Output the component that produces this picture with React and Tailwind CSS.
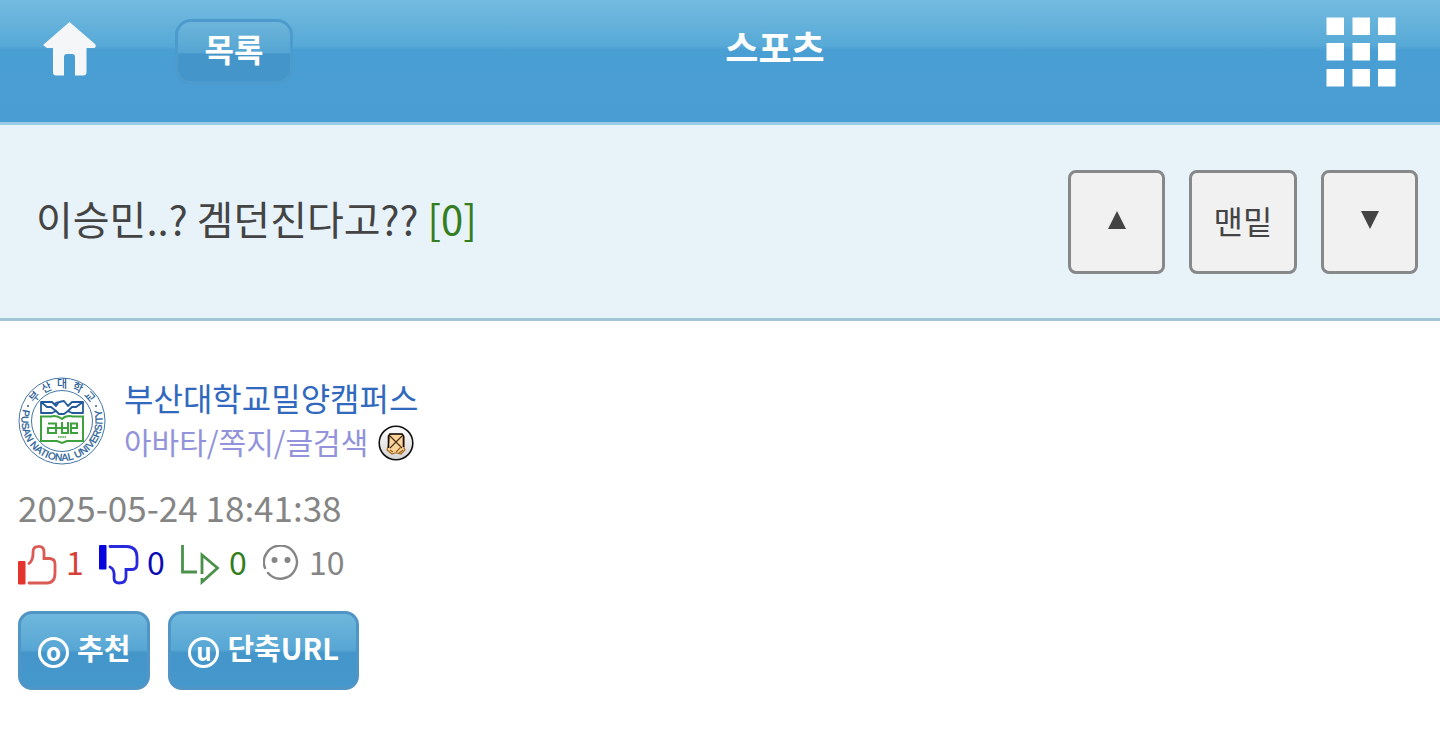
import React from "react";

const stats = [
  { label: "추천", value: 1, color: "text-[#d63f35]", width: "w-[47px]", Icon: ThumbUp },
  { label: "비추천", value: 0, color: "text-[#0b0bb5]", width: "w-[48px]", Icon: ThumbDown },
  { label: "댓글", value: 0, color: "text-[#347d20]", width: "w-[48px]", Icon: Reply },
  { label: "조회", value: 10, color: "text-[#858585]", width: "w-[46px]", Icon: Face },
];

function HomeIcon() {
  return (
    <svg viewBox="0 0 54 54" className="w-[54px] h-[54px] fill-[#f5f6f7]" aria-hidden="true">
      <path d="M26.5 0 L52 22 Q54 25 51 26 H43.5 V50 Q43.5 53.5 40 53.5 H32 V35 Q32 32 29 32 H24 Q21 32 21 35 V53.5 H13 Q10 53.5 10 50 V26 H4 L0 23Z" />
    </svg>
  );
}

function GridIcon() {
  return (
    <svg viewBox="0 0 70 70" className="w-[70px] h-[70px] fill-white" aria-hidden="true">
      {[0.5, 26, 52].map((y) =>
        [0.5, 26.5, 52].map((x) => (
          <rect key={`${x}-${y}`} x={x} y={y} width="17.5" height="17.5" />
        ))
      )}
    </svg>
  );
}

function Emblem() {
  return (
    <svg viewBox="0 0 88 88" className="w-[88px] h-[88px] shrink-0" role="img" aria-label="부산대학교">
      <defs>
        <path id="arc-top" d="M11 44 A33 33 0 0 1 77 44" />
        <path id="arc-bottom" d="M4.6 34 A40.5 40.5 0 1 0 83.4 34" />
      </defs>
      <circle cx="44" cy="44" r="43" fill="#fff" stroke="#4577a6" strokeWidth="1" />
      <circle cx="44" cy="44" r="30.5" fill="none" stroke="#4577a6" strokeWidth="1" />
      <g
        fontFamily="'Noto Sans CJK KR', sans-serif"
        fontSize="11"
        fontWeight="500"
        fill="#285d96"
        textAnchor="middle"
      >
        <text><textPath href="#arc-top" startOffset="23%">부</textPath></text>
        <text><textPath href="#arc-top" startOffset="36%">산</textPath></text>
        <text><textPath href="#arc-top" startOffset="50%">대</textPath></text>
        <text><textPath href="#arc-top" startOffset="64%">학</textPath></text>
        <text><textPath href="#arc-top" startOffset="77%">교</textPath></text>
      </g>
      <text
        fontFamily="'Liberation Sans', sans-serif"
        fontSize="10"
        fill="#285d96"
        stroke="#285d96"
        strokeWidth="0.3"
        textAnchor="middle"
      >
        <textPath href="#arc-bottom" startOffset="50%">
          PUSAN NATIONAL UNIVERSITY
        </textPath>
      </text>
      <circle cx="10" cy="29" r="1" fill="#285d96" />
      <circle cx="78" cy="29" r="1" fill="#285d96" />
      <path
        d="M23 25 H34 L38 29 L41 25 L46 24 L50 29 L54 25 H65 V36 H54 L50 34 L46 37 H41 L38 34 L34 36 H23Z"
        fill="none"
        stroke="#24599b"
        strokeWidth="1.8"
        strokeLinejoin="round"
      />
      <path
        d="M23 25 L29 30 H33 L38 34 M65 25 L58 30 H54 L50 34 M40 25 L36 27"
        fill="none"
        stroke="#24599b"
        strokeWidth="1.8"
      />
      <path
        d="M44 42 Q39 38 33 39.5 H23 V64 H39 L44 66 L49 64 H65 V39.5 H55 Q48 38 44 42Z"
        fill="none"
        stroke="#3da23e"
        strokeWidth="2"
      />
      <path
        d="M30 46.5 H38 V56 H30 V51 H44 V45 M44 56 V46 M44 51 H50 M50 45 V56 H43 M60 56 H53 V46.5 H59 V51 H53"
        fill="none"
        stroke="#3da23e"
        strokeWidth="2"
      />
      <path d="M40 60 H48" stroke="#3da23e" strokeWidth="1.6" strokeDasharray="1.5 0.7" />
    </svg>
  );
}

function LevelBadge() {
  return (
    <svg viewBox="0 0 36 36" className="w-9 h-9 shrink-0" aria-hidden="true">
      <defs>
        <linearGradient id="badge" x1="0" y1="0" x2="0" y2="1">
          <stop offset="0" stopColor="#fff" />
          <stop offset="1" stopColor="#d4d4d4" />
        </linearGradient>
      </defs>
      <circle cx="18" cy="18" r="16.8" fill="url(#badge)" stroke="#111" strokeWidth="1.6" />
      <path
        d="M12 9 H24 L26 12 V23 L27 25 L23 29 L19 28 L17 28 L14 29 L9 25 L10 22Z"
        fill="#fbd49a"
        stroke="#a86f25"
        strokeWidth="1.2"
      />
      <path d="M10.5 23 V11 L12 9 H24 L25.5 11 V22" fill="none" stroke="#111" strokeWidth="1.6" />
      <path d="M12 11 L24 23 M24 11 L12 23" stroke="#4a2f16" strokeWidth="1.2" />
      <path d="M12 25 L15 27 M18 27 L23 22 M21 28 L25 25" stroke="#9b611d" strokeWidth="1.2" />
    </svg>
  );
}

function ThumbUp() {
  return (
    <svg viewBox="0 0 40 40" className="w-10 h-10" fill="none" aria-hidden="true">
      <rect x="0" y="16" width="7.5" height="23.5" rx="1" fill="#e3352d" />
      <path
        d="M11 18.5 Q15.5 15 15 7 Q15 1.5 20 1.5 Q26 1 26 7 V13.5 H32 Q37 14 37 19 V28 Q37 38 29 38 H11"
        stroke="#dc5a54"
        strokeWidth="2.8"
        strokeLinecap="round"
      />
    </svg>
  );
}

function ThumbDown() {
  return (
    <svg viewBox="0 0 40 40" className="w-10 h-10" fill="none" aria-hidden="true">
      <rect x="0" y="0" width="7.5" height="24.5" rx="1" fill="#0606dc" />
      <path
        d="M11 1.5 H28 Q38 2 38 12 V19 Q38 24.5 33 24.5 H27 V32 Q27 38 20 38 Q15 38 15 33 Q16 24 11 22"
        stroke="#2929dc"
        strokeWidth="2.8"
        strokeLinecap="round"
      />
    </svg>
  );
}

function Reply() {
  return (
    <svg viewBox="0 0 40 40" className="w-10 h-10" fill="none" stroke="#4a914a" strokeWidth="2.8" aria-hidden="true">
      <path d="M1.5 0 V27 H16" />
      <path d="M21 29 V10 L36.5 23 L21 37 V33" />
    </svg>
  );
}

function Face() {
  return (
    <svg viewBox="0 0 38 40" className="w-[38px] h-10" aria-hidden="true">
      <path
        d="M2 23 A16.5 16.5 0 1 1 5 28"
        fill="none"
        stroke="#858585"
        strokeWidth="2.4"
        strokeLinecap="round"
      />
      <circle cx="11.5" cy="15" r="3" fill="#858585" />
      <circle cx="24.5" cy="15" r="3" fill="#858585" />
    </svg>
  );
}

function CircleLetter({ children }) {
  return (
    <span className="flex items-center justify-center w-[31px] h-[31px] mt-1 rounded-full border-3 border-white text-2xl leading-none pb-1">
      {children}
    </span>
  );
}

export default function App() {
  return (
    <div className="bg-white text-[#444] font-['Noto_Sans_CJK_KR',sans-serif]">
      <header className="flex items-start h-[125px] border-b-3 border-[#99cae6] bg-[linear-gradient(to_bottom,#73bbdf_0px,#57a9d7_46px,#499ed3_50px,#499dd3_100%)] pl-[43px] pr-11 text-white">
        <a href="#home" aria-label="홈" className="mt-[22px]">
          <HomeIcon />
        </a>
        <button className="ml-[78px] mt-[19px] w-[118px] h-[65px] rounded-2xl border-3 border-[#4d9bcc] bg-[linear-gradient(to_bottom,#6db5da_0%,#55a5d3_52%,#4496ca_54%,#4496ca_100%)] text-[32px] leading-none font-bold pb-2">
          목록
        </button>
        <h1 className="flex-1 mt-[22px] pr-[69px] text-center text-4xl leading-[48px] font-bold">스포츠</h1>
        <button aria-label="메뉴" className="mt-[17px]">
          <GridIcon />
        </button>
      </header>

      <section className="flex items-center justify-between h-[196px] border-b-3 border-[#a0c5d9] bg-[#e7f2f9] pl-9 pr-[22px]">
        <h2 className="pb-2 text-[40px] leading-[56px]">
          이승민..? 겜던진다고?? <span className="text-[#347d20]">[0]</span>
        </h2>
        <nav className="flex gap-6 text-[32px]">
          <button aria-label="이전글" className="flex items-center justify-center w-[97px] h-[104px] rounded-lg border-3 border-[#868889] bg-[#f1f1f1] pb-1">
            <svg viewBox="0 0 18 18" className="w-[18px] h-[18px] fill-[#444]" aria-hidden="true">
              <path d="M9 0 L18 18 H0Z" />
            </svg>
          </button>
          <button className="w-[108px] h-[104px] rounded-lg border-3 border-[#868889] bg-[#f1f1f1] pb-1">맨밑</button>
          <button aria-label="다음글" className="flex items-center justify-center w-[97px] h-[104px] rounded-lg border-3 border-[#868889] bg-[#f1f1f1] pb-1">
            <svg viewBox="0 0 18 18" className="w-[18px] h-[18px] fill-[#444]" aria-hidden="true">
              <path d="M0 0 H18 L9 18Z" />
            </svg>
          </button>
        </nav>
      </section>

      <main className="px-[18px] pt-14 pb-16">
        <div className="flex items-center gap-[18px]">
          <Emblem />
          <div>
            <a href="#author" className="block pb-1 text-[32px] leading-10 text-[#3069bd]">
              부산대학교밀양캠퍼스
            </a>
            <div className="flex items-center gap-[10px] text-[30px] leading-10 text-[#9293da]">
              <a href="#profile" className="pb-1">아바타/쪽지/글검색</a>
              <LevelBadge />
            </div>
          </div>
        </div>

        <p className="mt-[18px] text-[35px] leading-[48px] text-[#858585]">2025-05-24 18:41:38</p>

        <ul className="flex mt-[14px] gap-[34px] text-[32px] leading-10">
          {stats.map(({ label, value, color, width, Icon }) => (
            <li key={label} aria-label={label} className={`flex items-start gap-2 h-10 ${width} ${color}`}>
              <span className="shrink-0">
                <Icon />
              </span>
              <span className="-mt-1">{value}</span>
            </li>
          ))}
        </ul>

        <div className="flex mt-[26px] gap-[18px] text-[29px] leading-10 font-bold text-white">
          <button className="flex items-center gap-2 h-[79px] px-[17px] rounded-[14px] border-3 border-[#5095c5] bg-[linear-gradient(to_bottom,#6fb8dc_0%,#57a6d4_49%,#4496ca_53%,#4598cc_100%)]">
            <CircleLetter>o</CircleLetter>
            <span className="pb-2">추천</span>
          </button>
          <button className="flex items-center gap-2 h-[79px] px-[17px] rounded-[14px] border-3 border-[#5095c5] bg-[linear-gradient(to_bottom,#6fb8dc_0%,#57a6d4_49%,#4496ca_53%,#4598cc_100%)]">
            <CircleLetter>u</CircleLetter>
            <span className="pb-2">단축URL</span>
          </button>
        </div>
      </main>
    </div>
  );
}
